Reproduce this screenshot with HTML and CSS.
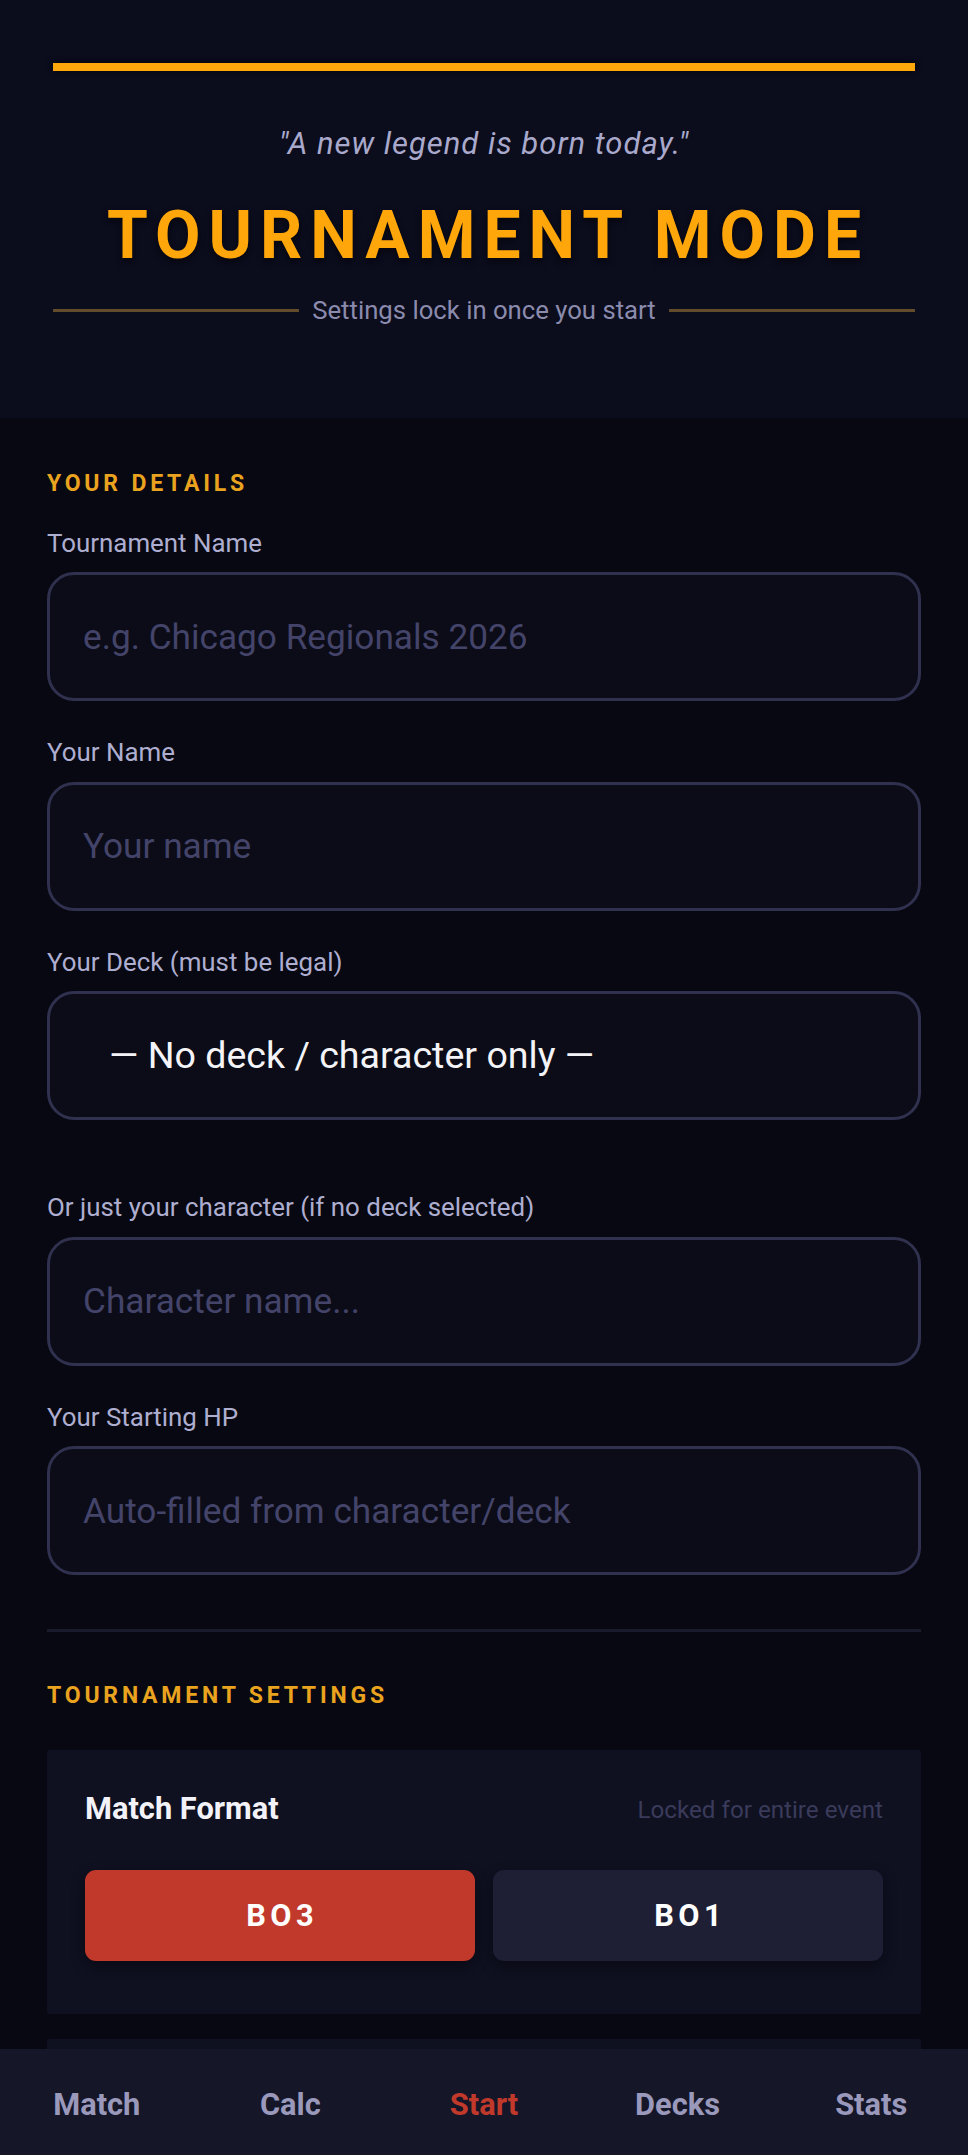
FILE: index.html
```html
<!DOCTYPE html>
<html lang="en">
<head>
    <meta charset="UTF-8">
    <meta name="viewport" content="width=device-width, initial-scale=1.0">
    <title>Tournament Mode</title>
    <link rel="stylesheet" href="styles.css">
</head>
<body>
    <div class="app">
        <header class="hero">
            <div class="hero-bar"></div>
            <p class="hero-quote">"A new legend is born today."</p>
            <h1 class="hero-title">TOURNAMENT MODE</h1>
            <div class="hero-sub">
                <span class="rule"></span>
                <span>Settings lock in once you start</span>
                <span class="rule"></span>
            </div>
        </header>

        <main class="setup">
            <h2 class="section-title">YOUR DETAILS</h2>

            <div class="field">
                <label for="t-name">Tournament Name</label>
                <input id="t-name" type="text" placeholder="e.g. Chicago Regionals 2026">
            </div>

            <div class="field">
                <label for="p-name">Your Name</label>
                <input id="p-name" type="text" placeholder="Your name">
            </div>

            <div class="field field-select">
                <label for="deck">Your Deck (must be legal)</label>
                <select id="deck">
                    <option>— No deck / character only —</option>
                </select>
            </div>

            <div class="field">
                <label for="char">Or just your character (if no deck selected)</label>
                <input id="char" type="text" placeholder="Character name...">
            </div>

            <div class="field">
                <label for="hp">Your Starting HP</label>
                <input id="hp" type="text" placeholder="Auto-filled from character/deck">
            </div>

            <hr class="divider">

            <h2 class="section-title">TOURNAMENT SETTINGS</h2>

            <div class="card">
                <div class="card-head">
                    <span class="card-title">Match Format</span>
                    <span class="card-note">Locked for entire event</span>
                </div>
                <div class="toggle">
                    <button class="toggle-btn active">BO3</button>
                    <button class="toggle-btn">BO1</button>
                </div>
            </div>

            <div class="card card-next"></div>
        </main>

        <nav class="bottom-nav">
            <a class="nav-item">Match</a>
            <a class="nav-item">Calc</a>
            <a class="nav-item active">Start</a>
            <a class="nav-item">Decks</a>
            <a class="nav-item">Stats</a>
        </nav>
    </div>
</body>
</html>
```

FILE: styles.css
```css
html, body {
    margin: 0;
    padding: 0;
}

body {
    background-color: #070811;
    color: #ffffff;
    font-family: Roboto, "Noto Sans", Arial, sans-serif;
}

.app {
    height: 100vh;
    overflow: hidden;
}

/* header */
.hero {
    background-color: #0b0c1c;
    padding: 63px 53px 94px;
    text-align: center;
}

.hero-bar {
    height: 8px;
    background-color: #ffa80c;
    box-shadow: 0 0 6px rgba(0, 0, 0, 0.7);
}

.hero-quote {
    margin: 57px 0 0;
    font-size: 31px;
    line-height: 1;
    font-style: italic;
    letter-spacing: 1px;
    color: #a9a9cb;
}

.hero-title {
    margin: 44px 0 0;
    font-size: 66px;
    line-height: 1;
    font-weight: 700;
    letter-spacing: 8px;
    text-indent: 8px; /* balance the trailing letter-spacing */
    color: #ffa60a;
    text-shadow: 0 3px 6px rgba(0, 0, 0, 0.5);
}

.hero-sub {
    margin-top: 29px;
    display: flex;
    align-items: center;
    gap: 13px;
    font-size: 25.7px;
    line-height: 1;
    color: #8b8bad;
}

.hero-sub .rule {
    flex: 1;
    height: 3px;
    background-color: #634c2c;
}

/* form */
.setup {
    padding: 54px 47px 0;
}

.section-title {
    margin: 0 0 36px;
    font-size: 23px;
    line-height: 1;
    font-weight: 700;
    letter-spacing: 3.8px;
    color: #eaa31f;
}

.field {
    display: flex;
    flex-direction: column;
    gap: 15.5px;
    margin-bottom: 39px;
}

.field label {
    font-size: 25.9px;
    line-height: 1;
    color: #aeaed0;
}

.field input, .field select {
    box-sizing: border-box;
    width: 100%;
    height: 129px;
    border: 3px solid #30304f;
    border-radius: 27px;
    background-color: #0b0c17;
    font-family: Roboto, "Noto Sans", Arial, sans-serif;
    font-size: 35.2px;
    outline: none;
}

.field input {
    padding: 0 30px 0 33px;
    color: #ffffff;
}

.field input::placeholder {
    color: #44446a;
}

.field select {
    -webkit-appearance: none;
    appearance: none;
    padding: 0 30px 0 59px;
    font-size: 37.6px;
    color: #f4f4f8;
}

.field-select {
    margin-bottom: 75.5px;
}

.divider {
    margin: 54px 0 52px;
    border: none;
    height: 3px;
    background-color: #191a2b;
}

/* settings cards */
.card {
    margin-top: 43px;
    padding: 44px 38px 53px;
    background-color: #0f1020;
    border-radius: 3px;
}

.card-next {
    margin-top: 25px;
    height: 200px;
    padding: 0;
}

.card-head {
    display: flex;
    justify-content: space-between;
    align-items: center;
}

.card-title {
    font-size: 30.8px;
    line-height: 1;
    font-weight: 700;
    color: #f2f2f8;
}

.card-note {
    font-size: 24.2px;
    line-height: 1;
    color: #3a3b5b;
}

.toggle {
    margin-top: 45px;
    display: grid;
    grid-template-columns: 1fr 1fr;
    gap: 18px;
}

.toggle-btn {
    height: 91px;
    border: none;
    border-radius: 11px;
    background-color: #1e1f35;
    color: #ffffff;
    font-family: Roboto, "Noto Sans", Arial, sans-serif;
    font-size: 30.8px;
    font-weight: 700;
    letter-spacing: 4.4px;
    text-indent: 4.4px;
    box-shadow: 0 6px 14px rgba(0, 0, 0, 0.35);
    cursor: pointer;
}

.toggle-btn.active {
    background-color: #c0392b;
}

/* bottom nav */
.bottom-nav {
    position: fixed;
    left: 0;
    right: 0;
    bottom: 0;
    height: 106px;
    box-sizing: border-box;
    padding-top: 6px;
    display: grid;
    grid-template-columns: repeat(5, 1fr);
    align-items: center;
    background-color: #151628;
}

.nav-item {
    text-align: center;
    font-size: 30.8px;
    line-height: 1;
    font-weight: 700;
    color: #9a99bc;
}

.nav-item.active {
    color: #c0392b;
}
```
